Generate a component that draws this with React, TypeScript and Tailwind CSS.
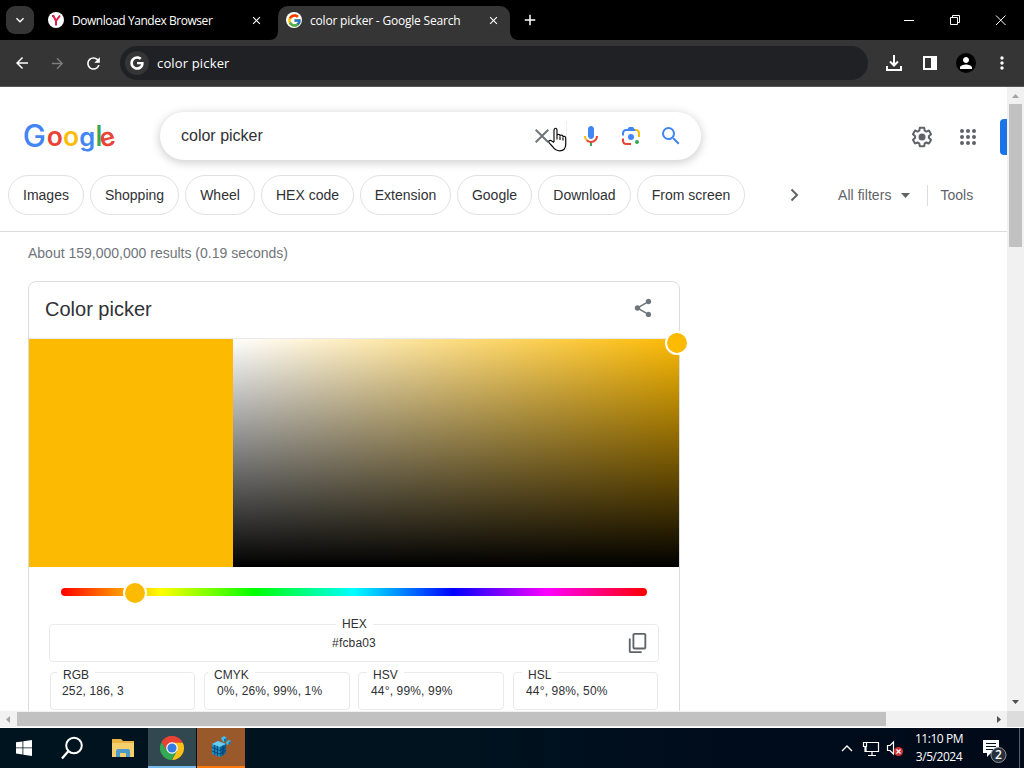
import type { ReactNode } from "react";
import { FcGoogle } from "react-icons/fc";
import { FaGoogle } from "react-icons/fa";
import {
  MdArrowBack, MdArrowForward, MdRefresh, MdMoreVert, MdShare, MdContentCopy,
  MdSearch, MdClose, MdKeyboardArrowDown, MdPerson, MdAdd,
} from "react-icons/md";

function WindowControls() {
  return (
    <svg width="120" height="40" viewBox="904 0 120 40" fill="none" stroke="#fff" strokeWidth="1">
      <path d="M904 20.5h10M950.500 17.500h7v7h-7zM952.500 17v-1.500h7v7h-1.500M996 15.500l9.500 9.500M1005.500 15.500l-9.500 9.500" />
    </svg>
  );
}

function TabStrip() {
  return (
    <div className="flex h-10 shrink-0 bg-black text-white">
      <div className="ml-1.5 mt-1.5 flex h-7 w-7 items-center justify-center rounded-[9px] bg-[#353535]">
        <MdKeyboardArrowDown size={16} />
      </div>
      <div className="ml-[14px] flex h-10 w-[230px] items-center">
        <div className="flex h-4 w-4 items-center justify-center rounded-full bg-white">
          <svg width="16" height="16" viewBox="0 0 16 16"><path d="M4 4h1.500L8 9v4.500M12 3.500L8 9" fill="none" stroke="#d81f48" strokeWidth="2" /></svg>
        </div>
        <span className="ml-2 w-[178px] whitespace-nowrap pt-px text-[12px] tracking-[-0.45px]">Download Yandex Browser</span>
        <MdClose size={13} />
      </div>
      <div className="relative mt-1.5 flex h-[34px] w-[232px] items-center rounded-t-[10px] bg-[#353535] pl-2">
        <svg className="absolute -left-2 bottom-0" width="8" height="8"><path d="M8 0v8H0A8 8 0 0 0 8 0" fill="#353535" /></svg>
        <svg className="absolute -right-2 bottom-0" width="8" height="8"><path d="M0 0v8h8A8 8 0 0 1 0 0" fill="#353535" /></svg>
        <div className="mb-1.5 flex h-4 w-4 items-center justify-center rounded-full bg-white"><FcGoogle size={15} /></div>
        <span className="mb-[5px] ml-2 w-[177px] whitespace-nowrap text-[12px] tracking-[-0.2px]">color picker - Google Search</span>
        <MdClose size={13} className="mb-1.5" />
      </div>
      <div className="flex flex-1 items-center pl-[11px]"><MdAdd size={18} /></div>
      <WindowControls />
    </div>
  );
}

function Toolbar() {
  return (
    <div className="flex h-[47px] shrink-0 items-center border-b border-[#5a5656] bg-[#353535] text-white">
      <MdArrowBack size={18} className="ml-[13px]" />
      <MdArrowForward size={17} className="ml-[18px] text-[#7d7d7d]" />
      <MdRefresh size={19} className="ml-[18px]" />
      <div className="ml-[17px] flex h-[34px] w-[748px] items-center rounded-full bg-[#202124] pl-[5px]">
        <div className="flex h-6 w-6 items-center justify-center rounded-full bg-[#353535]"><FaGoogle size={14} /></div>
        <span className="ml-2 pt-px text-[13px] tracking-[0.15px]">color picker</span>
      </div>
      <svg className="ml-[17px]" width="18" height="18" viewBox="0 0 18 18" fill="none" stroke="#fff" strokeWidth="2">
        <path d="M9 1v10M5 7.500l4 4 4-4M2 12v4h14v-4" />
      </svg>
      <svg className="ml-[19px]" width="16" height="16" viewBox="0 0 16 16">
        <path d="M2 2h12v12H2z" fill="none" stroke="#fff" strokeWidth="2" /><path d="M9 1h6v14H9z" fill="#fff" />
      </svg>
      <div className="ml-[18px] flex h-5 w-5 items-center justify-center rounded-full bg-black"><MdPerson size={18} /></div>
      <MdMoreVert size={20} className="ml-4" />
    </div>
  );
}

function Logo() {
  return (
    <svg className="ml-6 shrink-0 overflow-visible" width="92" height="48" viewBox="24 112 92 48" fontFamily="Inter, sans-serif" fontWeight="600">
      <text x="22.800" y="146.500" fontSize="31" fontWeight="500" fill="#4285f4">G</text>
      <text x="46.700" y="146" fontSize="26.500" fill="#ea4335">o</text>
      <text x="63" y="146" fontSize="26.500" fill="#fbbc05">o</text>
      <text x="79.300" y="146" fontSize="25.500" fill="#4285f4">g</text>
      <text x="95.300" y="146" fontSize="29" fontWeight="500" fill="#34a853">l</text>
      <text x="99.500" y="146" fontSize="26" fill="#ea4335" transform="rotate(-14 107.500 138)">e</text>
    </svg>
  );
}

function Mic() {
  return (
    <svg width="24" height="24" viewBox="0 0 24 24">
      <path fill="#4285f4" d="m12 15c1.66 0 3-1.31 3-2.97v-7.02c0-1.66-1.34-3.01-3-3.01s-3 1.34-3 3.01v7.02c0 1.66 1.34 2.97 3 2.97z" />
      <path fill="#34a853" d="m11 18.080h2v3.920h-2z" />
      <path fill="#fbbc05" d="m7.050 16.870c-1.270-1.330-2.050-2.830-2.050-4.870h2c0 1.450 0.560 2.420 1.470 3.380v0.320l-1.150 1.180z" />
      <path fill="#ea4335" d="m12 16.930a4.970 5.250 0 0 1-3.540-1.550l-1.410 1.490c1.260 1.340 3.020 2.130 4.950 2.130 3.870 0 6.990-2.920 6.990-7h-1.990c0 2.920-2.240 4.930-5 4.930z" />
    </svg>
  );
}

function Lens() {
  return (
    <svg width="24" height="24" viewBox="0 0 192 192">
      <circle fill="#34a853" cx="144" cy="144" r="16" />
      <circle fill="#4285f4" cx="96" cy="104" r="24" />
      <path fill="#ea4335" d="M24,135.200c0,18.110,14.690,32.800,32.800,32.800H96v-16l-40.100-0.100c-8.800,0-15.900-8.190-15.900-17.900v-18H24V135.200z" />
      <path fill="#fbbc04" d="M168,72.800c0-18.110-14.690-32.800-32.800-32.800H116l20,16c8.800,0,16,8.290,16,18v30h16V72.800z" />
      <path fill="#4285f4" d="M112,24l-32,0L68,40H56.800C38.690,40,24,54.690,24,72.800V92h16V74c0-9.710,7.200-18,16-18h80L112,24z" />
    </svg>
  );
}

function Gear() {
  return (
    <svg width="24" height="24" viewBox="0 0 24 24" fill="#5f6368">
      <path d="M13.85 22.25h-3.7c-.74 0-1.36-.54-1.45-1.27l-.27-1.89c-.27-.14-.53-.29-.79-.46l-1.8.72c-.7.26-1.47-.03-1.81-.65L2.2 15.53c-.35-.66-.2-1.44.36-1.88l1.53-1.19c-.01-.15-.02-.3-.02-.46 0-.15.01-.31.02-.46l-1.52-1.19c-.59-.45-.74-1.26-.37-1.88l1.85-3.19c.34-.62 1.11-.9 1.79-.63l1.81.73c.26-.17.52-.32.78-.46l.27-1.91c.09-.7.71-1.25 1.44-1.25h3.7c.74 0 1.36.54 1.45 1.27l.27 1.89c.27.14.53.29.79.46l1.8-.72c.71-.26 1.48.03 1.82.65l1.84 3.18c.36.66.2 1.44-.36 1.88l-1.52 1.19c.01.15.02.3.02.46s-.01.31-.02.46l1.52 1.19c.56.45.72 1.23.37 1.86l-1.86 3.22c-.34.62-1.11.9-1.8.63l-1.8-.72c-.26.17-.52.32-.78.46l-.27 1.91c-.1.68-.72 1.22-1.46 1.22zm-3.23-2h2.76l.37-2.55.53-.22c.44-.18.88-.44 1.34-.78l.45-.34 2.38.96 1.38-2.4-2.03-1.58.07-.56c.03-.26.06-.51.06-.78s-.03-.53-.06-.78l-.07-.56 2.03-1.58-1.39-2.4-2.39.96-.45-.35c-.42-.32-.87-.58-1.33-.77l-.52-.22-.37-2.55h-2.76l-.37 2.55-.53.21c-.44.19-.88.44-1.34.79l-.45.33-2.38-.95-1.39 2.39 2.03 1.58-.07.56a7 7 0 0 0-.06.79c0 .26.02.53.06.78l.07.56-2.03 1.58 1.38 2.4 2.39-.96.45.35c.43.33.86.58 1.33.77l.53.22.38 2.55z" />
      <circle cx="12" cy="12" r="3.500" />
    </svg>
  );
}

function AppsGrid() {
  const steps = [6, 12, 18];
  return (
    <svg className="ml-[22px]" width="24" height="24" viewBox="0 0 24 24" fill="#5f6368">
      {steps.map((y) => steps.map((x) => <circle key={`${x}-${y}`} cx={x} cy={y} r="2" />))}
    </svg>
  );
}

function PointerCursor() {
  return (
    <svg className="absolute left-[388px] top-[15px]" width="20" height="26" viewBox="0 0 20 26">
      <path d="M6 15V3.500C6 .5 9 .5 9 3.500V8.500c0-1.500 3-1.500 3 0v.7c0-1.500 3-1.500 3 .3v.7c0-1.500 2.700-1.200 2.700 .8V17c0 4-2 6.800-6 6.800C7.500 23.800 6.300 22 4.500 19.500L1.200 15.800c-1.200-2 1-3.300 2.600-1.800L6 15.500M9 8.500v4M12 9.500v3.500M15 10.500v3" fill="#fff" stroke="#111" strokeWidth="1.200" />
    </svg>
  );
}

const chips = [
  { label: "Images", width: "w-[76px]" },
  { label: "Shopping", width: "w-[89px]" },
  { label: "Wheel", width: "w-[70px]" },
  { label: "HEX code", width: "w-[93px]" },
  { label: "Extension", width: "w-[91px]" },
  { label: "Google", width: "w-[75px]" },
  { label: "Download", width: "w-[93px]" },
  { label: "From screen", width: "w-[108px]" },
];

function SearchHeader() {
  return (
    <>
      <div className="flex h-[48px] items-center">
        <Logo />
        <div className="relative ml-11 flex h-[48px] w-[541px] shrink-0 items-center rounded-full bg-white shadow-[0_2px_8px_1px_rgba(64,60,67,0.24)]">
          <span className="ml-[21px] w-[349px] text-[16px] text-[#303134]">color picker</span>
          <MdClose size={24} className="text-[#70757a]" />
          <div className="ml-3 h-[30px] w-px bg-[#eceef0]" />
          <div className="ml-3 flex items-center gap-4"><Mic /><Lens /><MdSearch size={24} className="text-[#4285f4]" /></div>
          <PointerCursor />
        </div>
        <div className="ml-[209px] mt-[2px] flex items-center text-[#5f6368]">
          <Gear />
          <AppsGrid />
          <div className="ml-5 h-9 w-[7px] rounded-l-[4px] bg-[#1a73e8]" />
        </div>
      </div>
      <div className="mt-[15px] flex h-[40px] items-center gap-1.5 pl-2 text-[14px] text-[#303134]">
        {chips.map((c) => (
          <div key={c.label} className={`${c.width} flex h-10 shrink-0 items-center justify-center whitespace-nowrap rounded-full border border-[#dfe1e5]`}>{c.label}</div>
        ))}
        <svg className="ml-[36px]" width="20" height="20" viewBox="0 0 20 20" fill="none" stroke="#5f6368" strokeWidth="2"><path d="M4.500 4.500l5.500 5.500-5.500 5.500" /></svg>
        <div className="ml-[25px] flex items-center text-[#5f6368]">
          <span className="whitespace-nowrap tracking-[0.05px]">All filters</span>
          <svg className="ml-[10px]" width="9" height="5"><path d="M0 0h9L4.500 5z" fill="#5f6368" /></svg>
          <div className="ml-[17px] h-[21px] w-px bg-[#dadce0]" />
          <span className="ml-3">Tools</span>
        </div>
      </div>
      <div className="mt-4 h-px bg-[#dadce0]" />
    </>
  );
}

function Field({ label, value, className, legend, children }: { label: string; value: string; className: string; legend: string; children?: ReactNode }) {
  return (
    <div className={`relative h-[38px] rounded-[4px] border border-[#e8eaed] text-[12px] text-[#303134] ${className}`}>
      <span className={`absolute bg-white px-1.5 leading-[12px] ${legend}`}>{label}</span>
      <span className="whitespace-nowrap leading-[36px] tracking-[0.16px]">{value}</span>
      {children}
    </div>
  );
}

function PickerCard() {
  return (
    <div className="ml-7 mt-[20px] flex h-[460px] w-[652px] flex-col rounded-t-lg border border-[#dadce0]">
      <div className="flex h-[57px] shrink-0 items-center justify-between border-b border-[#e8eaed] pb-[2px] pl-4 pr-[25px]">
        <h1 className="text-[20px] text-[#303134]">Color picker</h1>
        <MdShare size={22} className="mb-[3px] text-[#70757a]" />
      </div>
      <div className="relative flex h-[228px] shrink-0">
        <div className="w-[204px] bg-[#fcba03]" />
        <div className="flex-1 bg-[linear-gradient(to_top,#000,rgba(0,0,0,0)),linear-gradient(to_right,#fff,#fcba03)]" />
        <div className="absolute -right-[10px] -top-[8px] h-6 w-6 rounded-full border-2 border-white bg-[#fcba03]" />
      </div>
      <div className="relative ml-8 mt-[21px] h-2 w-[586px] shrink-0 rounded-full bg-[linear-gradient(to_right,#f00_0%,#ff0_17%,#0f0_33%,#0ff_50%,#00f_67%,#f0f_83%,#f00_100%)]">
        <div className="absolute -top-[7px] left-[62px] h-6 w-6 rounded-full border-2 border-white bg-[#fcba03]" />
      </div>
      <Field label="HEX" value="#fcba03" className="ml-5 mt-7 w-[610px] shrink-0 text-center" legend="left-[286px] -top-[7px]">
        <MdContentCopy size={22} className="absolute right-[9px] top-[7px] -scale-y-100 text-[#5f6368]" />
      </Field>
      <div className="ml-[21px] mt-[10px] flex">
        <Field label="RGB" value="252, 186, 3" className="w-[145px] pl-[11px]" legend="left-[6px] -top-[4px]" />
        <Field label="CMYK" value="0%, 26%, 99%, 1%" className="ml-[9px] w-[146px] pl-[12px]" legend="left-[3px] -top-[4px]" />
        <Field label="HSV" value="44°, 99%, 99%" className="ml-2 w-[146px] pl-[12px]" legend="left-[8px] -top-[4px]" />
        <Field label="HSL" value="44°, 98%, 50%" className="ml-[9px] w-[145px] pl-[12px]" legend="left-[8px] -top-[4px]" />
      </div>
    </div>
  );
}

function VerticalScrollbar() {
  return (
    <div className="flex w-[17px] shrink-0 flex-col items-center bg-[#f1f1f1]">
      <svg className="mt-[7px]" width="7" height="4"><path d="M0 4h7L3.500 0z" fill="#a3a3a3" /></svg>
      <div className="mt-[6px] h-[143px] w-[13px] bg-[#c1c1c1]" />
      <svg className="mb-[7px] mt-auto" width="7" height="4"><path d="M0 0h7L3.500 4z" fill="#505050" /></svg>
    </div>
  );
}

function HorizontalScrollbar() {
  return (
    <div className="flex h-[17px] shrink-0 items-center border-b border-white bg-[#f1f1f1]">
      <svg className="ml-[6px]" width="4" height="7"><path d="M4 0v7L0 3.500z" fill="#a3a3a3" /></svg>
      <div className="ml-[7px] h-[14px] w-[869px] bg-[#c1c1c1]" />
      <svg className="ml-[111px]" width="4" height="7"><path d="M0 0v7L4 3.500z" fill="#505050" /></svg>
      <div className="ml-auto h-full w-[17px] bg-[#dcdcdc]" />
    </div>
  );
}

function ChromeIcon() {
  return (
    <svg className="mt-px" width="24" height="24" viewBox="0 0 24 24">
      <path d="M12 12L1.600 6A12 12 0 0 1 22.400 6z" fill="#ea4335" />
      <path d="M12 6.500h10.700A12 12 0 0 1 12 24l4.800-9.300z" fill="#fbc116" />
      <path d="M1.600 6l5.600 9 9.600-.3L12 24A12 12 0 0 1 1.600 6z" fill="#34a853" />
      <path d="M1.600 6A12 12 0 0 1 22.400 6.500H12L7.200 15z" fill="#ea4335" />
      <circle cx="12" cy="12" r="5.800" fill="#fff" /><circle cx="12" cy="12" r="4.600" fill="#347be5" />
    </svg>
  );
}

function RegistryIcon() {
  return (
    <svg width="22" height="24" viewBox="0 0 22 24">
      <path d="M2 9l6-3 8 3v9l-6 4-8-3z" fill="#1c8fc6" />
      <path d="M2 9l6-3 8 3-6 3z" fill="#6acdf0" />
      <path d="M10 12l6-3v9l-6 4z" fill="#0b659f" />
      <path d="M2 12.500l8 3 6-3.500M2 16l8 3 6-4M4.700 10v10M7.400 11v10M13 10.500v10" stroke="#083a62" strokeWidth=".8" fill="none" />
      <path d="M11 3l3-2 3 2-1 3-3 1zM16 7l3-2 2 1-1 3-3 1z" fill="#45bce9" />
      <path d="M14 4l3-1-1 3-2 1zM19 7l2-1-1 3-2 1z" fill="#0e72ab" />
    </svg>
  );
}

function Taskbar() {
  return (
    <div className="flex h-10 shrink-0 bg-[linear-gradient(to_right,#00141f,#00131f_45%,#000c1c_70%,#000a19)] text-white">
      <div className="flex w-12 items-center justify-center">
        <svg width="16" height="16" viewBox="0 0 16 16" fill="#fff"><path d="M0 2.300l6.500-.9v6.100H0zM7.300 1.300L16 0v7.500H7.300zM0 8.300h6.500v6.200L0 13.600zM7.300 8.300H16V16l-8.700-1.200z" /></svg>
      </div>
      <div className="flex w-12 items-center justify-center">
        <svg width="24" height="24" viewBox="0 0 24 24" fill="none" stroke="#fff" strokeWidth="2"><circle cx="14" cy="9.500" r="7.800" /><path d="M8.500 15l-6.500 7.500" strokeWidth="2.300" /></svg>
      </div>
      <div className="flex w-[52px] items-center justify-center pl-px">
        <svg width="22" height="20" viewBox="0 0 22 20"><path d="M0 1h9l2 2h11v16H0z" fill="#e9b445" /><path d="M0 5h22v14H0z" fill="#f5cf6c" /><path d="M4 19v-6q0-2 2-2h10q2 0 2 2v6h-4v-4H8v4z" fill="#4c9acb" /></svg>
      </div>
      <div className="flex w-12 items-center justify-center border-b-2 border-[#76b9ed] bg-[#314850]"><ChromeIcon /></div>
      <div className="ml-px flex w-12 items-center justify-center border-b-2 border-[#ff7a10] bg-[#99592b]"><RegistryIcon /></div>
      <svg className="ml-auto" width="68" height="40" viewBox="839 728 68 40" fill="none" stroke="#fff" strokeWidth="1.200">
        <path d="M842 751l5-5 5 5" strokeWidth="1.400" />
        <path d="M867 742.500h11.500v9H866v-5M872 752v3M868 755.500h8M863.500 742.500h3v4h-3zM865 747v4.500h1" />
        <path d="M887.500 745.500h2.500l3.500-3.500v12l-3.500-3.500h-2.500z" />
        <circle cx="898.500" cy="751.500" r="4.600" fill="#d13438" stroke="none" />
        <path d="M896.500 749.500l4 4M900.500 749.500l-4 4" />
      </svg>
      <div className="w-[64px] pt-[2px] text-center text-[12px] leading-[18px] tracking-[-0.45px]"><div>11:10 PM</div><div>3/5/2024</div></div>
      <svg className="ml-[10px] mr-[4px]" width="34" height="40" viewBox="981 728 34 40">
        <path d="M983 740h16v13h-8l-4 4v-4h-4z" fill="#fff" /><path d="M986 743.500h10M986 746.500h10M986 749.500h7" stroke="#00101d" />
        <circle cx="998.500" cy="755" r="7.500" fill="#28313b" stroke="#8c949c" /><text x="998.500" y="759" textAnchor="middle" fontSize="12" fontWeight="600" fill="#fff">2</text>
      </svg>
      <div className="mr-[4px] w-px bg-[#56616d]" />
    </div>
  );
}

export default function App() {
  return (
    <div className="flex h-[768px] w-[1024px] flex-col overflow-hidden bg-white font-['Open_Sans',sans-serif]">
      <TabStrip />
      <Toolbar />
      <div className="flex h-[624px] shrink-0">
        <main className="w-[1007px] overflow-hidden pt-[25px] font-['Liberation_Sans',Arial,sans-serif]">
          <SearchHeader />
          <div className="mt-[11px] h-[21px] pl-7 text-[14px] leading-[21px] text-[#70757a]">About 159,000,000 results (0.19 seconds)</div>
          <div className="-mt-[3px]"><PickerCard /></div>
        </main>
        <VerticalScrollbar />
      </div>
      <HorizontalScrollbar />
      <Taskbar />
    </div>
  );
}
